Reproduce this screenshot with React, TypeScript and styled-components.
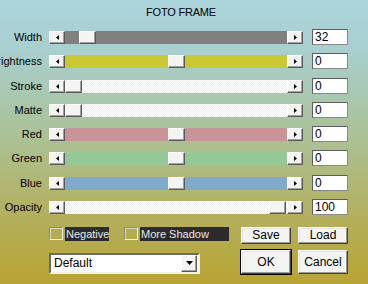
import React from "react";
import styled, { createGlobalStyle, css } from "styled-components";

const Global = createGlobalStyle`
  html, body { margin: 0; padding: 0; }
  body { font-family: "Liberation Sans", Arial, sans-serif; }
`;

const Window = styled.div`
  width: 368px;
  height: 284px;
  overflow: hidden;
  box-sizing: border-box;
  font-family: "Liberation Sans", Arial, sans-serif;
  font-size: 11px;
  color: #000;
  background: linear-gradient(
    180deg,
    #abd5dc 0%,
    #a9cfcf 18%,
    #a9c6a8 38%,
    #adbd88 55%,
    #b3b060 75%,
    #b7a840 92%,
    #b8a436 100%
  );
`;

const Title = styled.div`
  height: 29px;
  box-sizing: border-box;
  padding-top: 6px;
  padding-right: 6px;
  display: flex;
  justify-content: center;
  font-size: 11px;
  line-height: 13px;
  letter-spacing: -0.2px;
`;

const Rows = styled.div`
  display: flex;
  flex-direction: column;
`;

const Row = styled.div`
  display: flex;
  align-items: flex-start;
  height: 24.3px;
`;

const Label = styled.div`
  width: 42px;
  height: 16px;
  margin-right: 7px;
  display: flex;
  align-items: center;
  justify-content: flex-end;
  white-space: nowrap;
  font-size: 11px;
`;

const bevel = css`
  box-sizing: border-box;
  background: #f4f4f2;
  border: 1px solid;
  border-color: #ffffff #5a5a5a #5a5a5a #ffffff;
  box-shadow: inset -1px -1px 0 #a0a0a0;
`;

const Slider = styled.div`
  margin-top: 2px;
  margin-right: 9px;
  width: 254px;
  height: 13px;
  display: flex;
`;

const ArrowButton = styled.div`
  ${bevel};
  width: 16px;
  height: 13px;
  display: flex;
  align-items: center;
  justify-content: center;
  flex: none;
`;

const Track = styled.div<{ $fill: string; $dither?: boolean }>`
  position: relative;
  flex: 1;
  height: 13px;
  background-color: ${(p) => p.$fill};
  ${(p) =>
    p.$dither &&
    css`
      background-image: repeating-conic-gradient(#ffffff 0 25%, #ededed 0 50%);
      background-size: 2px 2px;
    `}
`;

const Thumb = styled.div`
  ${bevel};
  position: absolute;
  top: 0;
  width: 17px;
  height: 13px;
`;

const ValueBox = styled.div`
  box-sizing: border-box;
  width: 36px;
  height: 16px;
  background: #fff;
  border: 1px solid;
  border-color: #5e5e5e #8a8a8a #8a8a8a #5e5e5e;
  font-size: 12px;
  line-height: 14px;
  padding-left: 2px;
`;

const Bottom = styled.div`
  display: flex;
  margin-top: 3.6px;
  padding-left: 49px;
  gap: 12px;
`;

const LeftCol = styled.div`
  width: 180px;
  display: flex;
  flex-direction: column;
  gap: 12px;
`;

const CheckRow = styled.div`
  display: flex;
  align-items: center;
  height: 14px;
`;

const CheckBox = styled.div`
  box-sizing: border-box;
  width: 14px;
  height: 13px;
  border: 1px solid;
  border-color: #8c8c70 #f2f2e4 #f2f2e4 #8c8c70;
  box-shadow: inset 1px 1px 0 #d8d8c0;
  margin-right: 2px;
  flex: none;
`;

const CheckLabel = styled.div<{ $w: number }>`
  box-sizing: border-box;
  width: ${(p) => p.$w}px;
  height: 14px;
  background: #2b2b2b;
  color: #e8e8e8;
  font-size: 11px;
  line-height: 14px;
  padding-left: 1px;
  margin-right: 15px;
  white-space: nowrap;
  flex: none;
`;

const Select = styled.div`
  box-sizing: border-box;
  width: 151px;
  height: 21px;
  background: #fff;
  border: 2px solid;
  border-color: #6a6a6a #f2f2e6 #f2f2e6 #6a6a6a;
  display: flex;
  align-items: stretch;
  justify-content: space-between;
`;

const SelectText = styled.div`
  padding-left: 3px;
  font-size: 12px;
  line-height: 17px;
`;

const SelectButton = styled.div`
  ${bevel};
  width: 16px;
  height: 17px;
  display: flex;
  align-items: center;
  justify-content: center;
  margin-right: 1px;
`;

const ButtonGrid = styled.div`
  display: grid;
  grid-template-columns: 50px 50px;
  grid-template-rows: 17px 24px;
  column-gap: 7px;
  row-gap: 6px;
`;

const Button = styled.div<{ $default?: boolean }>`
  box-sizing: border-box;
  background: #f4f4f2;
  border: 1px solid;
  border-color: #ffffff #404040 #404040 #ffffff;
  box-shadow: inset -1px -1px 0 #9a9a9a, inset 1px 1px 0 #e4e4e4;
  display: flex;
  align-items: center;
  justify-content: center;
  font-size: 12px;
  ${(p) =>
    p.$default &&
    css`
      outline: 1px solid #000;
      outline-offset: 0;
      border-color: #ffffff #404040 #404040 #ffffff;
    `}
`;

const Tri = ({ dir }: { dir: "left" | "right" | "down" }) => {
  if (dir === "down")
    return (
      <svg width="7" height="4" viewBox="0 0 7 4">
        <path d="M0 0H7L3.5 4Z" fill="#000" />
      </svg>
    );
  return (
    <svg width="3" height="5" viewBox="0 0 3 5">
      <path d={dir === "left" ? "M3 0V5L0 2.5Z" : "M0 0V5L3 2.5Z"} fill="#000" />
    </svg>
  );
};

type RowData = {
  label: string;
  fill: string;
  dither?: boolean;
  thumb: number;
  value: string;
};

const rows: RowData[] = [
  { label: "Width", fill: "#808080", thumb: 14, value: "32" },
  { label: "Brightness", fill: "#cbc933", thumb: 103, value: "0" },
  { label: "Stroke", fill: "#ffffff", dither: true, thumb: 0, value: "0" },
  { label: "Matte", fill: "#ffffff", dither: true, thumb: 0, value: "0" },
  { label: "Red", fill: "#c99498", thumb: 103, value: "0" },
  { label: "Green", fill: "#94c896", thumb: 103, value: "0" },
  { label: "Blue", fill: "#7faacb", thumb: 103, value: "0" },
  { label: "Opacity", fill: "#ffffff", dither: true, thumb: 204, value: "100" },
];

export default function App() {
  return (
    <>
      <Global />
      <Window>
        <Title>FOTO FRAME</Title>
        <Rows>
          {rows.map((r) => (
            <Row key={r.label}>
              <Label>{r.label}</Label>
              <Slider>
                <ArrowButton>
                  <Tri dir="left" />
                </ArrowButton>
                <Track $fill={r.fill} $dither={r.dither}>
                  <Thumb style={{ left: r.thumb }} />
                </Track>
                <ArrowButton>
                  <Tri dir="right" />
                </ArrowButton>
              </Slider>
              <ValueBox>{r.value}</ValueBox>
            </Row>
          ))}
        </Rows>
        <Bottom>
          <LeftCol>
            <CheckRow>
              <CheckBox />
              <CheckLabel $w={44}>Negative</CheckLabel>
              <CheckBox />
              <CheckLabel $w={89}>More Shadow</CheckLabel>
            </CheckRow>
            <Select>
              <SelectText>Default</SelectText>
              <SelectButton>
                <Tri dir="down" />
              </SelectButton>
            </Select>
          </LeftCol>
          <ButtonGrid>
            <Button>Save</Button>
            <Button>Load</Button>
            <Button $default>OK</Button>
            <Button>Cancel</Button>
          </ButtonGrid>
        </Bottom>
      </Window>
    </>
  );
}
